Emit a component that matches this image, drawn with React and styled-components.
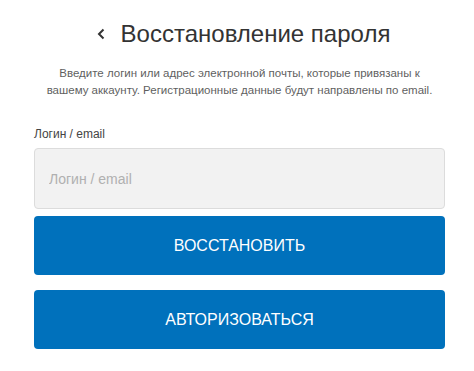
import React from "react";
import styled, { createGlobalStyle } from "styled-components";

const GlobalStyle = createGlobalStyle`
  html, body {
    margin: 0;
    padding: 0;
    background: #fff;
    font-family: "Liberation Sans", Arial, sans-serif;
  }
`;

const Page = styled.div`
  width: 411px;
  margin-left: 34px;
  padding-top: 18px;
`;

const Header = styled.div`
  display: flex;
  align-items: center;
  justify-content: center;
  gap: 16px;
  height: 32px;
  padding-left: 8px;
`;

const BackLink = styled.a`
  display: flex;
  align-items: center;
  color: #333;
  cursor: pointer;
`;

const Title = styled.h1`
  margin: 0;
  font-size: 24px;
  font-weight: 400;
  color: #333;
  line-height: 32px;
`;

const Description = styled.p`
  margin: 15px 0 0;
  text-align: center;
  font-size: 11.5px;
  line-height: 17px;
  color: #5f5f5f;
`;

const Field = styled.div`
  margin-top: 28px;
`;

const Label = styled.label`
  display: block;
  font-size: 12px;
  line-height: 14px;
  color: #444;
  margin-bottom: 7px;
`;

const Input = styled.input`
  box-sizing: border-box;
  width: 100%;
  height: 61px;
  padding: 0 14px;
  background: #f2f2f2;
  border: 1px solid #dcdcdc;
  border-radius: 4px;
  font-family: inherit;
  font-size: 14px;
  color: #333;
  outline: none;

  &::placeholder {
    color: #b0b0b0;
  }
`;

const Button = styled.button`
  display: block;
  box-sizing: border-box;
  width: 100%;
  height: 59px;
  margin-top: ${(p) => p.$gap}px;
  border: none;
  border-radius: 4px;
  background: #0071bc;
  color: #fff;
  font-family: inherit;
  font-size: 16px;
  text-transform: uppercase;
  cursor: pointer;
`;

const App = () => (
  <>
    <GlobalStyle />
    <Page>
      <Header>
        <BackLink>
          <svg width="8" height="12" viewBox="0 0 8 12">
            <polyline
              points="6.5,1.5 2,6 6.5,10.5"
              fill="none"
              stroke="#333"
              strokeWidth="2"
            />
          </svg>
        </BackLink>
        <Title>Восстановление пароля</Title>
      </Header>
      <Description>
        Введите логин или адрес электронной почты, которые привязаны к
        <br />
        вашему аккаунту. Регистрационные данные будут направлены по email.
      </Description>
      <Field>
        <Label>Логин / email</Label>
        <Input placeholder="Логин / email" />
      </Field>
      <Button $gap={7}>Восстановить</Button>
      <Button $gap={15}>Авторизоваться</Button>
    </Page>
  </>
);

export default App;
